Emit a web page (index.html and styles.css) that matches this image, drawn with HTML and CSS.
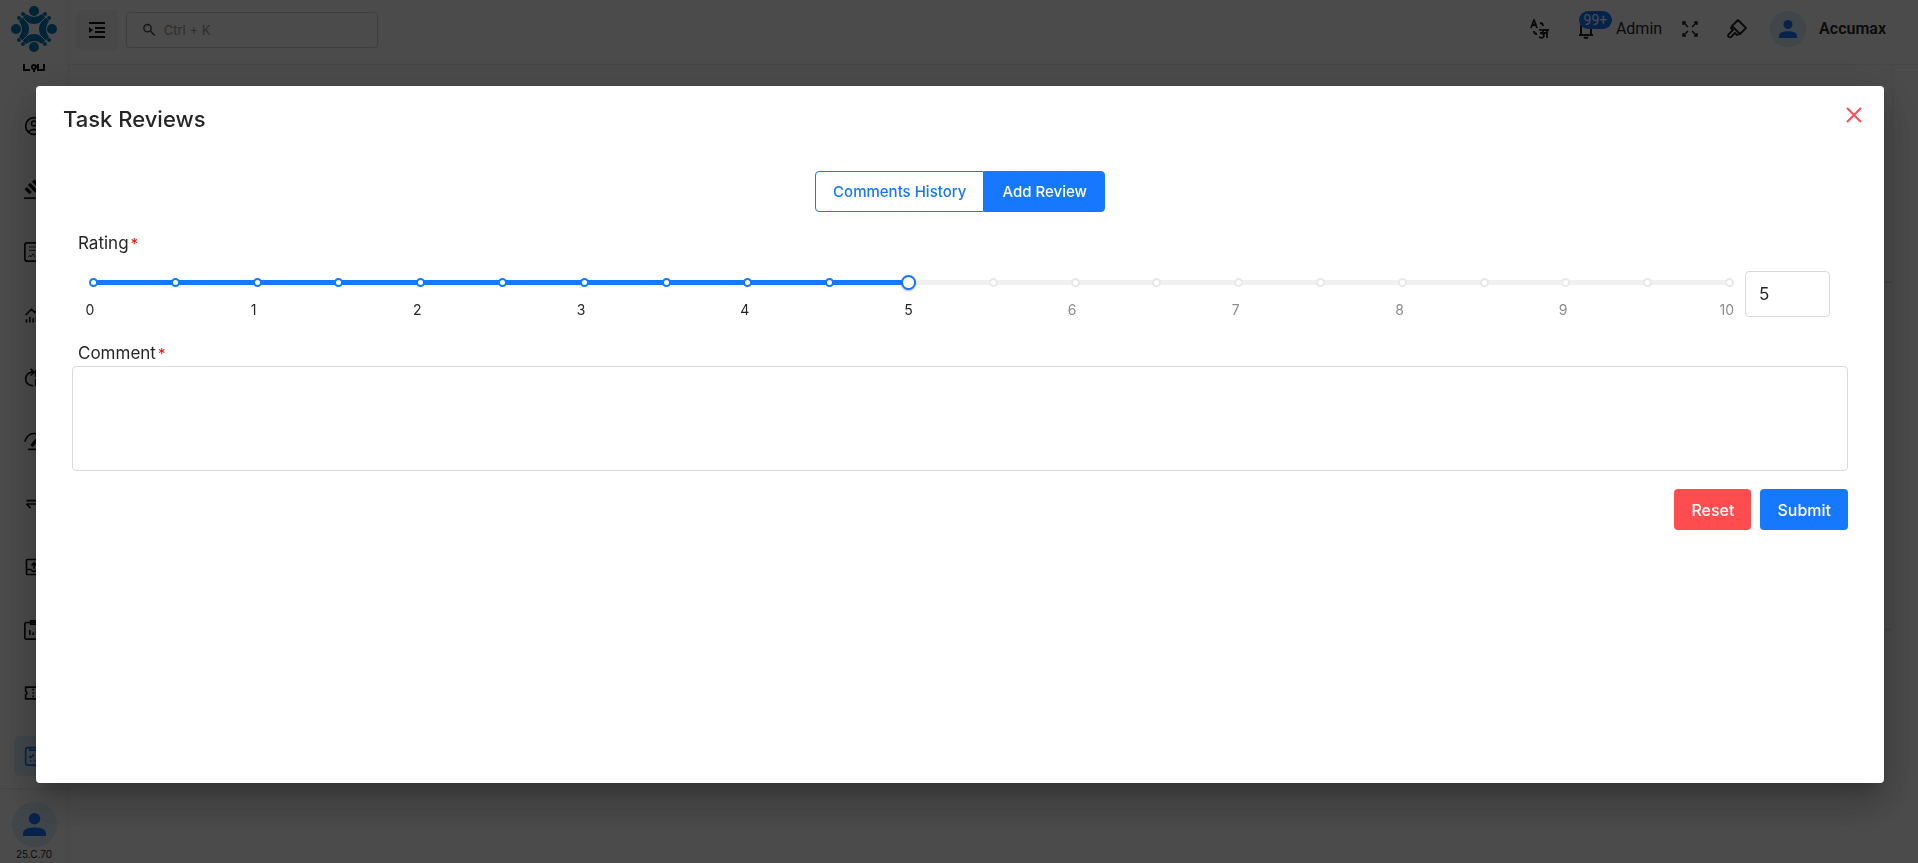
FILE: index.html
```
<!DOCTYPE html>
<html lang="en">
<head>
  <meta charset="UTF-8" />
  <meta name="viewport" content="width=device-width, initial-scale=1" />
  <title>Task Reviews</title>
  <link rel="stylesheet" href="styles.css">
</head>
<body>

  <div class="app">
    <!-- Sidebar -->
    <aside class="sidebar">
      <a class="logo" href="#" aria-label="Home">
        <svg width="46" height="46" viewBox="0 0 46 46" fill="#007bb8">
          <g id="petal">
            <circle cx="23" cy="5" r="5" />
            <path d="M15 8q8 6 16 0l4 4-6 5q-1 1-6 5q-5-4-6-5l-6-5z" />
            <circle cx="12" cy="8" r="2" />
            <circle cx="8" cy="12" r="2" />
          </g>
          <use href="#petal" transform="rotate(90 23 23)" />
          <use href="#petal" transform="rotate(180 23 23)" />
          <use href="#petal" transform="rotate(270 23 23)" />
          <path d="M16 16q7 4 14 0-4 7 0 14-7-4-14 0 4-7 0-14z" fill="#fafafa" />
          <path d="M11 11l6 6M35 11l-6 6M11 35l6-6M35 35l-6-6" stroke="#fafafa" />
        </svg>
        <svg class="wordmark" width="22" height="8" viewBox="0 0 22 8" fill="none" stroke="#111" stroke-width="2">
          <path d="M1 0v6h6M15 0v6h6V0" /><circle cx="11" cy="3" r="2" /><path d="M11 5v3" />
        </svg>
      </a>

      <nav class="menu">
        <a href="#" aria-label="Profile"><svg viewBox="0 0 24 24"><circle cx="12" cy="12" r="10" /><circle cx="12" cy="9" r="3" /><path d="M5 19q7-6 14 0" /></svg></a>
        <a href="#" aria-label="Leads"><svg viewBox="0 0 24 24"><path d="M0 23h14" /><path stroke-width="4" d="M2 11l6 6M6 6l9 9M11 2l9 9" /></svg></a>
        <a href="#" aria-label="Certificates"><svg viewBox="0 0 24 24"><rect x="1" y="1" width="22" height="22" rx="3" /><path stroke-width="1" d="M6 6h12M6 10h8M5 18l2-2 1 2 3-4 2 4" /></svg></a>
        <a href="#" aria-label="Analytics"><svg viewBox="0 0 24 24"><path d="M2 12l7-7 4 4 8-7M3 21v-4M7 21v-7M11 21v-5M15 21v-8M19 21V10" /></svg></a>
        <a href="#" aria-label="Process"><svg viewBox="0 0 24 24"><path d="M11 21a8 8 0 0 1-2-16h2M8 1l4 4-4 4M14 3v7h7V3zM14 14v7h7v-7z" /></svg></a>
        <a href="#" aria-label="Performance"><svg viewBox="0 0 24 24"><path d="M1 13Q4 3 12 3t11 10M5 22h16" /><path stroke-width="4" d="M9 18l7-8" /></svg></a>
        <a href="#" aria-label="Transfers"><svg viewBox="0 0 24 24"><path d="M3 8h19M3 12h19M3 12l5 5" /></svg></a>
        <a href="#" aria-label="Uploads"><svg viewBox="0 0 24 24"><rect x="3" y="3" width="18" height="18" rx="1" /><path d="M3 15h5q4 5 8 0h5M12 14V7M9 10l3-3 3 3" /></svg></a>
        <a href="#" aria-label="Reports"><svg viewBox="0 0 24 24"><rect x="1" y="3" width="22" height="20" rx="2" /><path d="M8 5V1h8v4zM7 12v6M11 15v3M15 10v8" /></svg></a>
        <a href="#" aria-label="Tickets"><svg viewBox="0 0 24 24"><path d="M2 5h20v5q-3 2 0 4v5H2v-5q3-2 0-4z" /><path stroke-dasharray="2 2" d="M11 7v11" /></svg></a>
        <a class="active" href="#" aria-label="Tasks"><svg viewBox="0 0 24 24"><rect x="2" y="2" width="20" height="21" rx="3" /><path d="M7 2v3h9V2M6 12l2 2 4-4M7 18h2M12 18h2" /></svg></a>
      </nav>

      <div class="sidebar-user">
        <span class="avatar avatar-lg"><svg viewBox="0 0 24 24"><circle cx="12" cy="6" r="6" /><path d="M0 24v-3q0-6 12-6t12 6v3z" /></svg></span>
        <span class="version">25.C.70</span>
      </div>
    </aside>

    <!-- Header -->
    <div class="page">
      <header class="topbar">
        <button class="toggle" aria-label="Toggle menu">
          <svg width="18" height="16" viewBox="0 0 18 16" fill="none" stroke="#111" stroke-width="2"><path d="M1 1h16M7 6h10M7 10h10M1 15h16" /><path d="M1 5l4 3-4 3z" fill="#111" stroke="none" /></svg>
        </button>
        <label class="search">
          <svg width="14" height="14" viewBox="0 0 14 14" fill="none" stroke="#444" stroke-width="1.5"><circle cx="5" cy="5" r="4" /><path d="M8 8l5 5" /></svg>
          <input type="text" placeholder="Ctrl + K" aria-label="Search" />
        </label>

        <div class="tools">
          <button aria-label="Language">
            <svg width="20" height="20" viewBox="0 0 20 20" fill="none" stroke="#222" stroke-width="1.8"><path d="M1 9l3-8 3 8M2 6h4M10 4q3 0 3 3M4 12q0 3 3 3" /><path d="M9 11q4-1 4 2 0 1-3 1 4 0 4 3-1 3-5 1M13 14h4M13 11h6M17 11v8" /></svg>
          </button>
          <button class="bell" aria-label="Notifications">
            <svg width="16" height="20" viewBox="0 0 16 20" fill="none" stroke="#222" stroke-width="2"><path d="M1 16h14M3 16V8q0-5 5-5t5 5v8" /><path d="M6 18q2 2 4 0" /></svg>
            <span class="badge">99+</span>
          </button>
          <span class="role">Admin</span>
          <button class="expand" aria-label="Full screen">
            <svg width="16" height="16" viewBox="0 0 16 16" fill="none" stroke="#222" stroke-width="1.5"><path d="M1 4V1h3M1 1l5 5M12 1h3v3M15 1l-5 5M1 12v3h3M1 15l5-5M12 15h3v-3M15 15l-5-5" /></svg>
          </button>
          <button class="theme" aria-label="Theme">
            <svg width="20" height="20" viewBox="0 0 20 20" fill="none" stroke="#222" stroke-width="1.8" stroke-linejoin="round"><path d="M11 1l8 8-6 6-8-8zM5 7l-1 2 2 2-4 4q-2 2 0 3t3-1l3-3 2 2 3-1" /></svg>
          </button>
          <span class="avatar"><svg viewBox="0 0 24 24"><circle cx="12" cy="6" r="6" /><path d="M0 24v-3q0-6 12-6t12 6v3z" /></svg></span>
          <span class="account">Accumax</span>
        </div>
      </header>
      <main class="content">
        <div class="panel panel-head"></div>
        <div class="panel panel-body"></div>
      </main>
    </div>
  </div>

  <!-- Task review dialog -->
  <div class="backdrop">
    <section class="modal" role="dialog" aria-modal="true" aria-labelledby="modalTitle">
      <header class="modal-header">
        <h1 id="modalTitle">Task Reviews</h1>
        <button class="close" aria-label="Close">
          <svg width="16" height="16" viewBox="0 0 16 16" fill="none" stroke="#ff4d4f" stroke-width="2"><path d="M1 1l14 14M15 1L1 15" /></svg>
        </button>
      </header>

      <div class="tabs">
        <button>Comments History</button>
        <button class="selected">Add Review</button>
      </div>

      <form class="review">
        <label class="field-label" for="rating">Rating<span>*</span></label>
        <div class="rating-row">
          <div class="slider">
            <div class="rail">
              <div class="track"></div>
              <div class="dots">
                <i class="on"></i><i class="on"></i><i class="on"></i><i class="on"></i><i class="on"></i>
                <i class="on"></i><i class="on"></i><i class="on"></i><i class="on"></i><i class="on"></i>
                <i class="hide"></i>
                <i></i><i></i><i></i><i></i><i></i><i></i><i></i><i></i><i></i><i></i>
              </div>
              <input type="range" id="rating" min="0" max="10" step="0.5" value="5" />
            </div>
            <div class="marks">
              <span class="on">0</span><span class="on">1</span><span class="on">2</span><span class="on">3</span><span class="on">4</span><span class="on">5</span>
              <span>6</span><span>7</span><span>8</span><span>9</span><span>10</span>
            </div>
          </div>
          <input class="score" type="text" value="5" aria-label="Rating value" />
        </div>

        <label class="field-label" for="comment">Comment<span>*</span></label>
        <textarea id="comment"></textarea>

        <div class="actions">
          <button type="reset" class="danger">Reset</button>
          <button type="submit">Submit</button>
        </div>
      </form>
    </section>
  </div>

</body>
</html>
```
FILE: styles.css
```
* {
  box-sizing: border-box;
}

body {
  margin: 0;
  font-family: Inter, "Open Sans", sans-serif;
  font-size: 16px;
  color: #262626;
  background: #fafafa;
  overflow: hidden;
}

button, input, textarea {
  font-family: inherit;
  color: inherit;
}

button {
  border: none;
  padding: 0;
  background: none;
  cursor: pointer;
}

svg {
  display: block;
}

.app {
  display: flex;
  height: 100vh;
}

/* Sidebar */
.sidebar {
  width: 69px;
  display: flex;
  flex-direction: column;
  background: #fafafa;
  border-right: 1px solid #eee;
}

.logo {
  height: 106px;
  padding-top: 6px;
  display: flex;
  flex-direction: column;
  align-items: center;
  gap: 12px;
  flex-shrink: 0;
}

.menu {
  flex: 1;
  min-height: 0;
  overflow: hidden;
  display: flex;
  flex-direction: column;
  align-items: center;
  gap: 23px;
}

.menu a {
  width: 40px;
  height: 40px;
  flex-shrink: 0;
  display: flex;
  align-items: center;
  justify-content: center;
  border-radius: 6px;
}

.menu svg {
  width: 20px;
  height: 20px;
  fill: none;
  stroke: #111;
  stroke-width: 2;
}

.menu .active {
  background: #d9ebfa;
}

.menu .active svg {
  stroke: #1677ff;
}

.sidebar-user {
  height: 75px;
  border-top: 2px solid #eee;
  display: flex;
  flex-direction: column;
  align-items: center;
  padding-top: 12px;
}

.version {
  font-size: 10px;
  line-height: 14px;
}

.avatar {
  width: 36px;
  height: 36px;
  border-radius: 50%;
  background: #d9ebfa;
  display: flex;
  align-items: center;
  justify-content: center;
}

.avatar svg {
  width: 18px;
  height: 18px;
  fill: #1677ff;
}

.avatar-lg {
  width: 45px;
  height: 45px;
}

.avatar-lg svg {
  width: 23px;
  height: 23px;
}

/* Header */
.page {
  flex: 1;
}

.topbar {
  height: 65px;
  padding: 0 32px 4px 8px;
  display: flex;
  align-items: center;
  border-bottom: 1px solid #eee;
}

.toggle {
  width: 40px;
  height: 40px;
  border-radius: 4px;
  background: #f0f0f0;
  display: flex;
  align-items: center;
  justify-content: center;
}

.search {
  width: 252px;
  height: 36px;
  margin-left: 9px;
  padding: 0 16px;
  border: 1px solid #d0d0d0;
  border-radius: 4px;
  display: flex;
  align-items: center;
  gap: 6px;
}

.search input {
  width: 100%;
  border: none;
  background: none;
  font-size: 13px;
}

.search input::placeholder {
  color: #999;
}

.tools {
  margin-left: auto;
  display: flex;
  align-items: center;
  font-family: Roboto, sans-serif;
  line-height: 18px;
  padding-bottom: 2px;
}

.bell {
  position: relative;
  margin-left: 28px;
}

.badge {
  position: absolute;
  top: -8px;
  left: 1px;
  width: 33px;
  border-radius: 9px;
  background: #1677ff;
  color: #fff;
  font-size: 14px;
  line-height: 18px;
}

.role {
  margin-left: 22px;
}

.expand {
  margin-left: 20px;
}

.theme {
  margin: 0 23px 0 29px;
}

.account {
  margin-left: 13px;
  font-weight: 600;
}

.content {
  padding: 0 25px 0 24px;
}

.panel {
  border-right: 1px solid #eee;
}

.panel-head {
  height: 218px;
  border-bottom: 2px solid #e0e0e0;
}

.panel-body {
  height: 347px;
  border-bottom: 1px solid #e0e0e0;
}

/* Dialog */
.backdrop {
  position: fixed;
  inset: 0;
  padding: 86px 34px 80px 36px;
  display: flex;
  background: rgba(0, 0, 0, 0.7);
}

.modal {
  flex: 1;
  padding: 17px 36px;
  border-radius: 4px;
  background: #fff;
  box-shadow: 0 11px 15px -7px rgba(0,0,0,0.2), 0 24px 38px 3px rgba(0,0,0,0.14), 0 9px 46px 8px rgba(0,0,0,0.12);
}

.modal-header {
  display: flex;
  justify-content: space-between;
  align-items: flex-start;
  margin: 0 -18px 0 -9px;
}

.modal-header h1 {
  margin: 0;
  font-size: 22px;
  line-height: 32px;
  font-weight: 500;
}

.close {
  padding: 4px;
}

.tabs {
  margin-top: 36px;
  display: flex;
  justify-content: center;
}

.tabs button {
  height: 41px;
  padding: 0 17px;
  border: 1px solid #1677ff;
  border-radius: 4px 0 0 4px;
  color: #1677ff;
  font-size: 15px;
  font-weight: 500;
}

.tabs .selected {
  border-radius: 0 4px 4px 0;
  background: #1677ff;
  color: #fff;
}

.field-label {
  display: block;
  padding-left: 6px;
  font-size: 17px;
  line-height: 24px;
}

.field-label span {
  margin-left: 2px;
  font-size: 15px;
  color: #f00;
}

.review {
  padding-top: 19px;
}

.rating-row {
  display: flex;
  align-items: flex-start;
  padding: 15px 18px 0 8px;
  margin-bottom: 21px;
  gap: 8px;
}

.slider {
  flex: 1;
}

.rail {
  display: grid;
  align-items: center;
  height: 23px;
}

.rail > * {
  grid-area: 1 / 1;
}

.track {
  height: 5px;
  margin: 0 8px 0 13px;
  background: linear-gradient(to right, #1677ff 50%, #f0f0f0 50%);
}

.dots {
  display: flex;
  justify-content: space-between;
  margin: 0 3px 0 9px;
}

.dots i {
  width: 9px;
  height: 9px;
  border: 2px solid #e8e8e8;
  border-radius: 50%;
  background: #fff;
}

.dots .on {
  border-color: #1677ff;
}

.dots .hide {
  visibility: hidden;
}

.rail input {
  appearance: none;
  height: 15px;
  margin: 0 3px 0 2px;
  background: none;
}

.rail input::-webkit-slider-thumb {
  appearance: none;
  width: 15px;
  height: 15px;
  border: 2px solid #1677ff;
  border-radius: 50%;
  background: #fff;
  box-shadow: 0 1px 2px rgba(0,0,0,0.3);
}

.marks {
  display: flex;
  justify-content: space-between;
  margin-top: 6px;
  font-size: 14px;
  line-height: 20px;
  color: #8c8c8c;
}

.marks span {
  width: 20px;
  text-align: center;
}

.marks .on {
  color: #262626;
}

.score {
  width: 85px;
  height: 46px;
  padding: 0 13px;
  border: 1px solid #d9d9d9;
  border-radius: 4px;
  font-size: 17px;
}

textarea {
  display: block;
  width: 100%;
  height: 105px;
  border: 1px solid #d9d9d9;
  border-radius: 4px;
  resize: none;
}

.actions {
  margin-top: 18px;
  display: flex;
  justify-content: flex-end;
  gap: 9px;
}

.actions button {
  height: 41px;
  padding: 0 17px;
  border-radius: 4px;
  background: #1677ff;
  color: #fff;
  font-size: 16px;
  font-weight: 500;
}

.actions .danger {
  background: #ff4d4f;
}
```
